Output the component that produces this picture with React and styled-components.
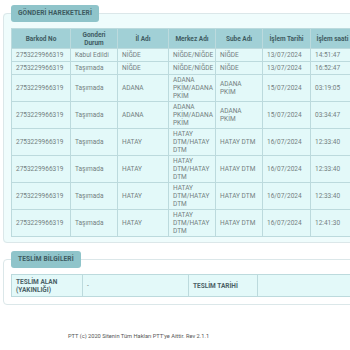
import React from "react";
import styled, { createGlobalStyle } from "styled-components";

const GlobalStyle = createGlobalStyle`
    html, body {
        margin: 0;
        padding: 0;
        background: #ffffff;
        overflow: hidden;
    }
    body {
        font-family: Roboto, "Liberation Sans", Arial, sans-serif;
    }
`;

const Page = styled.div`
    width: 380px;
    padding-top: 5px;
    display: flex;
    flex-direction: column;
`;

const Panel = styled.fieldset`
    margin: ${props => props.$top || 0}px 0 0 3px;
    padding: 6px 8px ${props => props.$bottom || 5}px 7px;
    border: 1px solid #dbe7e9;
    border-radius: 4px;
    background: ${props => props.$tint ? '#effcfc' : '#ffffff'};
    min-width: 0;
`;

const Legend = styled.legend`
    padding: 0 7px;
    height: 17px;
    line-height: 17px;
    background: #8fc4ca;
    border-radius: 3px;
    color: #3d5a60;
    font-size: 6.6px;
    font-weight: 700;
    letter-spacing: 0.1px;
`;

const Table = styled.table`
    border-collapse: collapse;
    table-layout: fixed;
    width: ${props => props.$width}px;

    th, td {
        border: 1px solid #bcdadd;
        padding: 1px 4px;
        font-size: 6.5px;
        line-height: 8px;
        vertical-align: middle;
        text-align: left;
    }

    th {
        background: #a1d0d6;
        color: #3f5c62;
        font-weight: 700;
        text-align: center;
        height: 17px;
    }

    td {
        background: #e3f9f9;
        color: #737f81;
        height: 10px;
    }
`;

const Label = styled.td`
    && {
        color: #4b6166;
        font-weight: 700;
        height: 19px;
    }
`;

const Footer = styled.div`
    margin-top: 28px;
    padding-left: 68px;
    font-size: 5.7px;
    color: #555555;
`;

const rows = [
    ["Kabul Edildi", "NİĞDE", "NİĞDE/NİĞDE", "NİĞDE", "13/07/2024", "14:51:47"],
    ["Taşımada", "NİĞDE", "NİĞDE/NİĞDE", "NİĞDE", "13/07/2024", "16:52:47"],
    ["Taşımada", "ADANA", "ADANA PKİM/ADANA PKİM", "ADANA PKİM", "15/07/2024", "03:19:05"],
    ["Taşımada", "ADANA", "ADANA PKİM/ADANA PKİM", "ADANA PKİM", "15/07/2024", "03:34:47"],
    ["Taşımada", "HATAY", "HATAY DTM/HATAY DTM", "HATAY DTM", "16/07/2024", "12:33:40"],
    ["Taşımada", "HATAY", "HATAY DTM/HATAY DTM", "HATAY DTM", "16/07/2024", "12:33:40"],
    ["Taşımada", "HATAY", "HATAY DTM/HATAY DTM", "HATAY DTM", "16/07/2024", "12:33:40"],
    ["Taşımada", "HATAY", "HATAY DTM/HATAY DTM", "HATAY DTM", "16/07/2024", "12:41:30"],
];

const widths = [59, 47, 51, 47, 47, 48, 44];

const App = () => {
    return (
        <>
            <GlobalStyle />
            <Page>
                <Panel $tint>
                    <Legend>GÖNDERİ HAREKETLERİ</Legend>
                    <Table $width={343}>
                        <colgroup>
                            {widths.map((w, i) => <col key={i} style={{ width: w }} />)}
                        </colgroup>
                        <thead>
                            <tr>
                                <th>Barkod No</th>
                                <th>Gonderi<br />Durum</th>
                                <th>İl Adı</th>
                                <th>Merkez Adı</th>
                                <th>Sube Adı</th>
                                <th>İşlem Tarihi</th>
                                <th>İşlem saati</th>
                            </tr>
                        </thead>
                        <tbody>
                            {rows.map((row, index) => (
                                <tr key={index}>
                                    <td>2753229966319</td>
                                    {row.map((cell, i) => <td key={i}>{cell}</td>)}
                                </tr>
                            ))}
                        </tbody>
                    </Table>
                </Panel>
                <Panel $top={8} $bottom={7}>
                    <Legend>TESLİM BİLGİLERİ</Legend>
                    <Table $width={360}>
                        <colgroup>
                            <col style={{ width: 71 }} />
                            <col style={{ width: 106 }} />
                            <col style={{ width: 69 }} />
                            <col style={{ width: 114 }} />
                        </colgroup>
                        <tbody>
                            <tr>
                                <Label>TESLİM ALAN<br />(YAKINLIĞI)</Label>
                                <td>-</td>
                                <Label>TESLİM TARİHİ</Label>
                                <td></td>
                            </tr>
                        </tbody>
                    </Table>
                </Panel>
                <Footer>PTT (c) 2020 Sitenin Tüm Hakları PTT'ye Aittir. Rev 2.1.1</Footer>
            </Page>
        </>
    );
}

export default App;
